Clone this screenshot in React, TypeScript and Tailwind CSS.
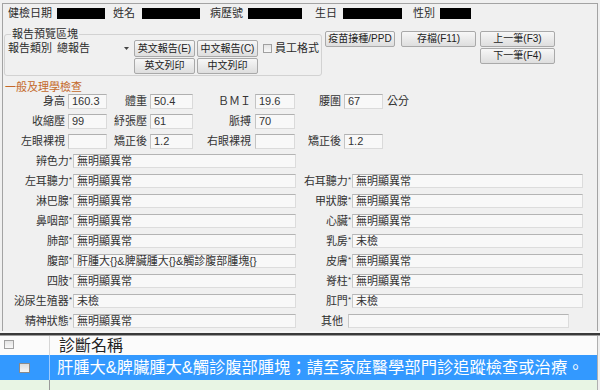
const font = "font-['Liberation_Sans','Noto_Sans_CJK_TC',sans-serif]";

function Btn({ w, h = "h-[17px]", children }: { w: string; h?: string; children: React.ReactNode }) {
  return (
    <div
      className={`${w} ${h} flex items-center justify-center whitespace-nowrap rounded-[2px] border border-[#a9a9a9] bg-linear-to-b from-[#f7f7f7] to-[#dedede] text-[10px] leading-none text-[#222]`}
    >
      {children}
    </div>
  );
}

function Box({ w, value = "" }: { w: string; value?: string }) {
  return (
    <div
      className={`${w} h-[15px] flex items-center pl-[3px] border border-[#dadada] border-t-[#b0b0b0] border-l-[#c4c4c4] bg-[#f8f8f8] text-[11px] leading-none text-[#333]`}
    >
      {value}
    </div>
  );
}

function Field({ w, value = "" }: { w: string; value?: string }) {
  return (
    <div
      className={`${w} h-[14px] flex items-center pl-[3px] border border-[#dcdcdc] border-t-[#b4b4b4] border-l-[#c8c8c8] bg-[#f8f8f8] text-[11px] leading-none text-[#333] whitespace-nowrap overflow-hidden`}
    >
      {value}
    </div>
  );
}

function Lbl({ w, text, star = true }: { w: string; text: string; star?: boolean }) {
  return (
    <div className={`${w} text-right text-[11px] leading-none text-[#333] whitespace-nowrap`}>
      {text}
      {star && <span className="text-[8px] align-top">*</span>}
    </div>
  );
}

function Check({ cls = "" }: { cls?: string }) {
  return <div className={`w-[9px] h-[9px] border border-[#a0a0a0] bg-linear-to-b from-[#e4e4e4] to-[#f8f8f8] ${cls}`} />;
}

const rows: [string, string, string | null, string][] = [
  ["辨色力", "無明顯異常", null, ""],
  ["左耳聽力", "無明顯異常", "右耳聽力", "無明顯異常"],
  ["淋巴腺", "無明顯異常", "甲狀腺", "無明顯異常"],
  ["鼻咽部", "無明顯異常", "心臟", "無明顯異常"],
  ["肺部", "無明顯異常", "乳房", "未檢"],
  ["腹部", "肝腫大{}&脾臟腫大{}&觸診腹部腫塊{}", "皮膚", "無明顯異常"],
  ["四肢", "無明顯異常", "脊柱", "無明顯異常"],
  ["泌尿生殖器", "未檢", "肛門", "未檢"],
  ["精神狀態", "無明顯異常", "其他", ""],
];

export default function App() {
  return (
    <div className={`w-[600px] h-[390px] bg-[#f0f0f0] overflow-hidden ${font} text-[#2b2b2b]`}>
      <div className="ml-[2px] mt-[3px] w-[596px] h-[328px] border border-b-0 border-[#a3a3a3]">
        {/* header info row */}
        <div className="mt-[2px] h-[14px] flex items-center pl-[5px] text-[11px] leading-none">
          <span className="w-[49px]">健檢日期</span>
          <span className="w-[48px] h-[11px] bg-black" />
          <span className="ml-[8px] w-[29px]">姓名</span>
          <span className="w-[58px] h-[11px] bg-black" />
          <span className="ml-[10px] w-[38px]">病歷號</span>
          <span className="w-[54px] h-[11px] bg-black" />
          <span className="ml-[13px] w-[28px]">生日</span>
          <span className="w-[59px] h-[11px] bg-black" />
          <span className="ml-[11px] w-[27px]">性別</span>
          <span className="w-[31px] h-[11px] bg-black" />
        </div>

        {/* report preview + actions */}
        <div className="mt-[8px] flex items-start">
          <fieldset className="ml-[1px] w-[318px] border border-[#d2d2d2] rounded-[3px] pb-[1px]">
            <legend className="ml-[6px] px-[1px] text-[11px] leading-[12px]">報告預覽區塊</legend>
            <div className="h-[17px] flex items-center pl-[3px]">
              <span className="w-[47px] text-[11px] leading-none">報告類別</span>
              <div className="w-[78px] h-[15px] flex items-center justify-between pl-[2px] pr-[4px] text-[11px] leading-none">
                <span>總報告</span>
                <svg width="5" height="3" viewBox="0 0 5 3">
                  <path d="M0 0h5L2.5 3z" fill="#444" />
                </svg>
              </div>
              <div className="ml-[1px]">
                <Btn w="w-[61px]">英文報告(E)</Btn>
              </div>
              <div className="ml-[2px]">
                <Btn w="w-[61px]">中文報告(C)</Btn>
              </div>
              <Check cls="ml-[5px]" />
              <span className="ml-[3px] text-[11px] leading-none">員工格式</span>
            </div>
            <div className="h-[17px] flex items-center pl-[129px] gap-[2px]">
              <Btn w="w-[61px]" h="h-[16px]">英文列印</Btn>
              <Btn w="w-[61px]" h="h-[16px]">中文列印</Btn>
            </div>
          </fieldset>

          <div className="ml-[3px] mt-[3px]">
            <div className="flex">
              <Btn w="w-[70px]" h="h-[16px]">疫苗接種/PPD</Btn>
              <div className="ml-[6px]">
                <Btn w="w-[75px]" h="h-[16px]">存檔(F11)</Btn>
              </div>
              <div className="ml-[4px]">
                <Btn w="w-[75px]" h="h-[16px]">上一筆(F3)</Btn>
              </div>
            </div>
            <div className="mt-[1px] ml-[155px]">
              <Btn w="w-[75px]" h="h-[16px]">下一筆(F4)</Btn>
            </div>
          </div>
        </div>

        {/* section title */}
        <div className="mt-[4px] h-[14px] pl-[2px] text-[11px] leading-[14px] text-[#c4692a]">一般及理學檢查</div>

        {/* measurements */}
        <div className="h-[15px] flex items-center">
          <Lbl w="w-[62px]" text="身高" star={false} />
          <div className="ml-[3px]"><Box w="w-[39px]" value="160.3" /></div>
          <Lbl w="w-[40px]" text="體重" star={false} />
          <div className="ml-[3px]"><Box w="w-[43px]" value="50.4" /></div>
          <Lbl w="w-[58px]" text="ＢＭＩ" star={false} />
          <div className="ml-[4px]"><Box w="w-[40px]" value="19.6" /></div>
          <Lbl w="w-[46px]" text="腰圍" star={false} />
          <div className="ml-[3px]"><Box w="w-[39px]" value="67" /></div>
          <span className="ml-[4px] text-[11px] leading-none">公分</span>
        </div>
        <div className="mt-[5px] h-[15px] flex items-center">
          <Lbl w="w-[62px]" text="收縮壓" star={false} />
          <div className="ml-[3px]"><Box w="w-[39px]" value="99" /></div>
          <Lbl w="w-[40px]" text="紓張壓" star={false} />
          <div className="ml-[3px]"><Box w="w-[43px]" value="61" /></div>
          <Lbl w="w-[58px]" text="脈搏" star={false} />
          <div className="ml-[4px]"><Box w="w-[40px]" value="70" /></div>
        </div>
        <div className="mt-[5px] h-[15px] flex items-center">
          <Lbl w="w-[62px]" text="左眼裸視" star={false} />
          <div className="ml-[3px]"><Box w="w-[39px]" /></div>
          <Lbl w="w-[40px]" text="矯正後" star={false} />
          <div className="ml-[3px]"><Box w="w-[43px]" value="1.2" /></div>
          <Lbl w="w-[58px]" text="右眼裸視" star={false} />
          <div className="ml-[4px]"><Box w="w-[40px]" /></div>
          <Lbl w="w-[46px]" text="矯正後" star={false} />
          <div className="ml-[3px]"><Box w="w-[39px]" value="1.2" /></div>
        </div>

        {/* exam findings */}
        <div className="mt-[5px] flex flex-col gap-[6px]">
          {rows.map(([l, lv, r, rv]) => (
            <div key={l} className="h-[14px] flex items-center">
              <Lbl w="w-[69px]" text={l} />
              <div className="ml-[1px]"><Field w="w-[223px]" value={lv} /></div>
              {r === "其他" ? (
                <>
                  <div className="w-[49px] pr-[2px] text-right text-[11px] leading-none">其他</div>
                  <div className="ml-[3px]"><Field w="w-[221px]" /></div>
                </>
              ) : r ? (
                <>
                  <Lbl w="w-[55px]" text={r} />
                  <div className="ml-[1px]"><Field w="w-[231px]" value={rv} /></div>
                </>
              ) : null}
            </div>
          ))}
        </div>
      </div>

      {/* divider */}
      <div className="h-[2px] bg-[#f6f6f6]" />
      <div className="h-[2px] bg-[#3a3a3a]" />
      <div className="h-[1px] bg-[#9c9c9c]" />

      {/* diagnosis grid */}
      <div className="w-[598px] border-r border-[#b0b0b0]">
        <div className="h-[19px] flex bg-[#fbfbfb]">
          <div className="w-[50px] border-r border-[#d6d6d6] pl-[4px] pt-[4px]">
            <Check cls="w-[10px]" />
          </div>
          <div className="pl-[9px] text-[16px] leading-[19px] text-[#222]">診斷名稱</div>
        </div>
        <div className="h-[25px] flex items-center bg-[#3399ff]">
          <div className="w-[50px] h-full border-r border-[#9ccaff] flex items-center justify-center">
            <div className="w-[11px] h-[10px] border border-[#8a8a8a] bg-linear-to-b from-[#dcdcdc] to-[#f6f6f6]" />
          </div>
          <div className="pl-[7px] text-[16.3px] leading-none text-white whitespace-nowrap">
            肝腫大&amp;脾臟腫大&amp;觸診腹部腫塊；請至家庭醫學部門診追蹤檢查或治療。
          </div>
        </div>
        <div className="h-[10px] flex bg-[#e8f5e4]">
          <div className="w-[50px] border-r border-[#9a9a9a]" />
        </div>
      </div>
    </div>
  );
}
